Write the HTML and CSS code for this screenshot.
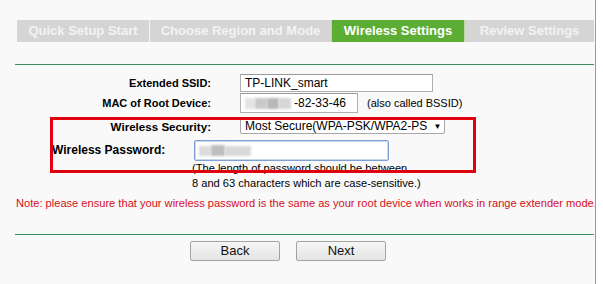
FILE: index.html
```html
<!DOCTYPE html>
<html>
<head>
<meta charset="utf-8">
<link rel="stylesheet" href="styles.css">
</head>
<body>
<div class="page">
  <div class="main">
    <div class="tabs">
      <div class="tab t1">Quick Setup Start</div>
      <div class="tab t2">Choose Region and Mode</div>
      <div class="tab t3 active">Wireless Settings</div>
      <div class="tab t4">Review Settings</div>
    </div>
    <div class="rule top"></div>
    <div class="form">
      <div class="row r1">
        <div class="label">Extended SSID:</div>
        <div class="field"><div class="input ssid">TP-LINK_smart</div></div>
      </div>
      <div class="row r2">
        <div class="label">MAC of Root Device:</div>
        <div class="field">
          <div class="input mac"><span class="blur b1"></span><span class="blur b2"></span><span class="blur b3"></span><span class="blur b4"></span><span class="mactext">-82-33-46</span></div>
          <span class="hint">(also called BSSID)</span>
        </div>
      </div>
      <div class="row r3">
        <div class="label sec">Wireless Security:</div>
        <div class="field"><div class="select"><span class="seltext">Most Secure(WPA-PSK/WPA2-PS</span><span class="arrow">▼</span></div></div>
      </div>
      <div class="row r4">
        <div class="label pw">Wireless Password:</div>
        <div class="input pass"><span class="blur p1"></span><span class="blur p2"></span><span class="blur p3"></span></div>
      </div>
      <div class="help">(The length of password should be between<br>8 and 63 characters which are case-sensitive.)</div>
      <div class="note">Note: please ensure that your wireless password is the same as your root device when works in range extender mode.</div>
    </div>
    <div class="rule bottom"></div>
    <div class="buttons">
      <div class="btn">Back</div>
      <div class="btn">Next</div>
    </div>
    <div class="highlight"></div>
  </div>
  <div class="edge"></div>
</div>
</body>
</html>
```
FILE: styles.css
```css
html, body {
  margin: 0;
  padding: 0;
  background: #f9f9f9;
  font-family: "Liberation Sans", Arial, sans-serif;
  color: #000;
}
.page {
  display: flex;
  width: 603px;
  height: 284px;
  overflow: hidden;
}
.main {
  position: relative;
  width: 595px;
  height: 284px;
  border-right: 1px solid #9a9a9a;
  overflow: hidden;
  flex: none;
}
.edge {
  flex: 1;
  background: #ffffff;
}
.tabs {
  display: flex;
  margin: 20px 0 0 17px;
  height: 22px;
}
.tab {
  height: 22px;
  line-height: 22px;
  font-size: 13px;
  font-weight: bold;
  color: #f3f3f3;
  background: #d5d5d5;
  text-align: center;
  box-sizing: border-box;
  white-space: nowrap;
}
.t1 { width: 133px; border-right: 1px solid #f4f4f4; }
.t2 { width: 181px; }
.t3 { width: 134px; }
.t4 { width: 129px; }
.tab.active {
  background: #5bae33;
  color: #ffffff;
  border-left: 1px solid #b9dca6;
  border-right: 1px solid #b9dca6;
}
.rule {
  margin-left: 15px;
  width: 579px;
  height: 0;
  border-top: 1px solid #3f8f5a;
}
.rule.top { margin-top: 22px; }
.form {
  padding-top: 7px;
}
.row {
  display: flex;
  align-items: center;
}
.r1 { height: 21px; }
.r2 { height: 20px; }
.r3 { height: 26px; }
.r4 { height: 22px; padding-left: 52px; }
.label {
  width: 211px;
  text-align: right;
  font-weight: bold;
  font-size: 11px;
  flex: none;
}
.label.sec { font-size: 11.6px; }
.label.pw {
  width: auto;
  text-align: left;
  font-size: 12px;
  margin-right: 29px;
}
.field {
  display: flex;
  align-items: center;
  margin-left: 29px;
}
.input {
  position: relative;
  box-sizing: border-box;
  background: #ffffff;
  border: 1px solid #b0b0b0;
  border-top-color: #9a9a9a;
  font-size: 12px;
  white-space: nowrap;
  overflow: hidden;
}
.ssid {
  width: 193px;
  height: 18px;
  line-height: 16px;
  padding-left: 4px;
}
.mac {
  width: 118px;
  height: 20px;
  line-height: 18px;
  padding-left: 53px;
  font-size: 12px;
}
.blur {
  position: absolute;
  filter: blur(1.2px);
}
.b1 { left: 4px; top: 4px; width: 10px; height: 11px; background: #e4e4e4; }
.b2 { left: 14px; top: 4px; width: 12px; height: 11px; background: #c9c9c9; }
.b3 { left: 26px; top: 4px; width: 12px; height: 11px; background: #b8b8b8; }
.b4 { left: 38px; top: 4px; width: 12px; height: 11px; background: #d6d6d6; }
.hint {
  font-size: 11px;
  margin-left: 9px;
}
.select {
  box-sizing: border-box;
  width: 205px;
  height: 16px;
  border: 1px solid #a8a8a8;
  background: #ffffff;
  border-radius: 2px;
  display: flex;
  align-items: center;
  font-size: 12px;
  overflow: hidden;
  white-space: nowrap;
}
.seltext {
  width: 186px;
  flex: none;
  overflow: hidden;
  padding-left: 4px;
  line-height: 14px;
}
.arrow {
  font-size: 8px;
  width: 13px;
  text-align: center;
  flex: none;
}
.pass {
  width: 195px;
  height: 21px;
  border: 1px solid #7f9fd6;
  box-shadow: inset 0 0 0 1px #c8d8f0;
  border-radius: 2px;
}
.p1 { left: 4px; top: 5px; width: 12px; height: 10px; background: #dcdcdc; }
.p2 { left: 16px; top: 4px; width: 14px; height: 11px; background: #bebebe; }
.p3 { left: 30px; top: 5px; width: 26px; height: 10px; background: #d9d9d9; }
.help {
  margin-left: 192px;
  font-size: 11.1px;
  line-height: 15px;
}
.note {
  margin: 5px 0 0 16px;
  font-size: 11.1px;
  line-height: 15px;
  color: #d40f1c;
  white-space: nowrap;
}
.rule.bottom { margin-top: 23px; }
.buttons {
  display: flex;
  margin: 6px 0 0 190px;
  gap: 16px;
}
.btn {
  box-sizing: border-box;
  width: 90px;
  height: 20px;
  line-height: 18px;
  text-align: center;
  font-size: 13px;
  border: 1px solid #a3a3a3;
  border-radius: 2px;
  background: linear-gradient(#f6f6f6, #e4e4e4);
  color: #111;
}
.highlight {
  position: absolute;
  left: 50px;
  top: 117px;
  width: 426px;
  height: 56px;
  box-sizing: border-box;
  border: 3px solid #e0000e;
}
```
